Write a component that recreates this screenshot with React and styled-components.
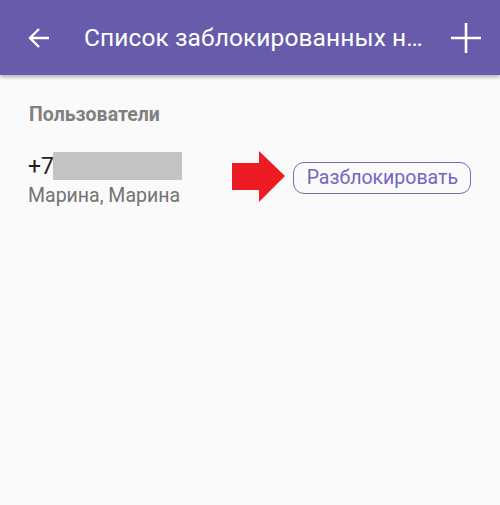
import React from "react";
import styled, { createGlobalStyle } from "styled-components";

const Global = createGlobalStyle`
  html, body { margin: 0; padding: 0; background: #fafafa; }
  body { font-family: Roboto, "Noto Sans", sans-serif; width: 500px; height: 505px; overflow: hidden; }
`;

const Page = styled.div`
  width: 500px;
  height: 505px;
  background: #fafafa;
  display: flex;
  flex-direction: column;
`;

const Toolbar = styled.header`
  height: 75px;
  background: #665cab;
  display: flex;
  align-items: center;
  padding: 0 18px 0 27px;
  box-shadow: 0 2px 4px rgba(0, 0, 0, 0.3);
  box-sizing: border-box;
  flex-shrink: 0;
`;

const IconButton = styled.div`
  display: flex;
  align-items: center;
  justify-content: center;
  flex-shrink: 0;
  width: ${(p) => p.$size}px;
  height: ${(p) => p.$size}px;
`;

const Title = styled.h1`
  flex: 1;
  margin: 0 0 0 33px;
  font-size: 24.5px;
  font-weight: 400;
  color: #ffffff;
  white-space: nowrap;
  letter-spacing: 0.1px;
`;

const Content = styled.main`
  padding: 28px 29px 0 28px;
  display: flex;
  flex-direction: column;
`;

const SectionLabel = styled.div`
  font-size: 19.5px;
  font-weight: 700;
  color: #808080;
  margin-left: 1px;
  line-height: 24px;
`;

const Row = styled.div`
  margin-top: 25px;
  display: flex;
  align-items: flex-start;
`;

const Contact = styled.div`
  display: flex;
  flex-direction: column;
  flex: 1;
`;

const Phone = styled.div`
  display: flex;
  align-items: center;
  font-size: 23px;
  color: #1f1f1f;
  height: 28px;
`;

const Masked = styled.span`
  display: inline-block;
  width: 129px;
  height: 28px;
  background: #c3c3c3;
  margin-left: -1px;
`;

const Name = styled.div`
  font-size: 19.5px;
  color: #737373;
  margin-top: 3px;
  line-height: 26px;
`;

const UnblockButton = styled.button`
  height: 32px;
  margin-top: 10px;
  padding: 0 12px 0 13px;
  border: 1.7px solid #7569ba;
  border-radius: 11px;
  background: transparent;
  color: #7266c4;
  font-family: Roboto, "Noto Sans", sans-serif;
  font-size: 19.5px;
  line-height: 1;
  margin-left: 8px;
  box-sizing: border-box;
`;

const Pointer = styled.svg`
  flex-shrink: 0;
  margin-top: -1px;
`;

export default function App() {
  return (
    <Page>
      <Global />
      <Toolbar>
        <IconButton $size={24}>
          <svg width="24" height="24" viewBox="0 0 24 24">
            <path d="M22 12H3.5M12 3L3 12l9 9" fill="none" stroke="#fff" strokeWidth="2.4" />
          </svg>
        </IconButton>
        <Title>Список заблокированных н…</Title>
        <IconButton $size={32}>
          <svg width="32" height="32" viewBox="0 0 32 32">
            <path d="M16 1v30M1 16h30" fill="none" stroke="#fff" strokeWidth="2.6" />
          </svg>
        </IconButton>
      </Toolbar>
      <Content>
        <SectionLabel>Пользователи</SectionLabel>
        <Row>
          <Contact>
            <Phone>
              +7<Masked />
            </Phone>
            <Name>Марина, Марина</Name>
          </Contact>
          <Pointer width="53" height="52" viewBox="0 0 53 52">
            <polygon points="0,12 27,12 27,0 53,25 27,51 27,39 0,39" fill="#ed1c24" />
          </Pointer>
          <UnblockButton>Разблокировать</UnblockButton>
        </Row>
      </Content>
    </Page>
  );
}
